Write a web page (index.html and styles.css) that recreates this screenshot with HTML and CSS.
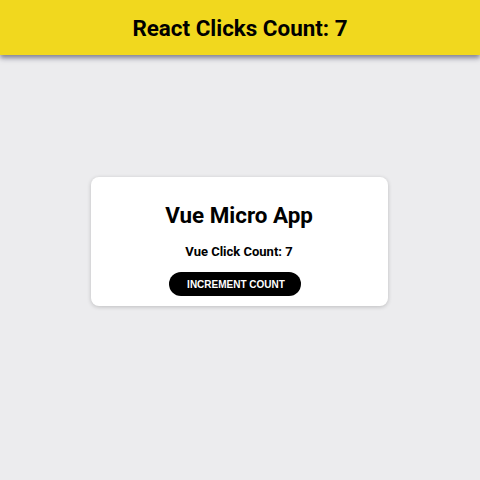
FILE: index.html
```html
<!DOCTYPE html>
<html>
<head>
<meta charset="utf-8">
<link rel="stylesheet" href="styles.css">
</head>
<body>
<header class="topbar">
  <h1 class="topbar-title">React Clicks Count: 7</h1>
</header>
<main class="stage">
  <section class="card">
    <h2 class="card-title">Vue Micro App</h2>
    <p class="card-count">Vue Click Count: 7</p>
    <button class="btn">INCREMENT COUNT</button>
  </section>
</main>
</body>
</html>
```
FILE: styles.css
```css
html, body {
  margin: 0;
  padding: 0;
}
body {
  background: #ececee;
  font-family: Roboto, "Liberation Sans", Arial, sans-serif;
  color: #000;
  height: 480px;
  overflow: hidden;
}
.topbar {
  height: 55px;
  background: #f1d81e;
  display: flex;
  align-items: center;
  justify-content: center;
  box-shadow: 0 3px 5px rgba(40, 40, 70, 0.55);
  position: relative;
  z-index: 1;
}
.topbar-title {
  margin: 0;
  font-size: 22.4px;
  font-weight: 700;
  line-height: 28px;
}
.stage {
  display: flex;
  justify-content: center;
  padding-top: 122px;
}
.card {
  width: 297px;
  box-sizing: border-box;
  background: #fff;
  border-radius: 8px;
  box-shadow: 0 1px 4px rgba(0, 0, 0, 0.2);
  padding: 24px 16px 10px;
  margin-left: -2px;
  display: flex;
  flex-direction: column;
  align-items: center;
}
.card-title {
  margin: 0;
  font-size: 22.4px;
  font-weight: 700;
  line-height: 28px;
}
.card-count {
  margin: 13px 0 10px;
  font-size: 13px;
  font-weight: 700;
  line-height: 20px;
}
.btn {
  width: 132px;
  height: 24px;
  margin-right: 8px;
  border: none;
  border-radius: 12px;
  background: #000;
  color: #fff;
  font-family: "Liberation Sans", Arial, sans-serif;
  font-weight: 700;
  font-size: 10px;
  letter-spacing: 0;
  padding: 0 0 0 2px;
  cursor: pointer;
}
```
